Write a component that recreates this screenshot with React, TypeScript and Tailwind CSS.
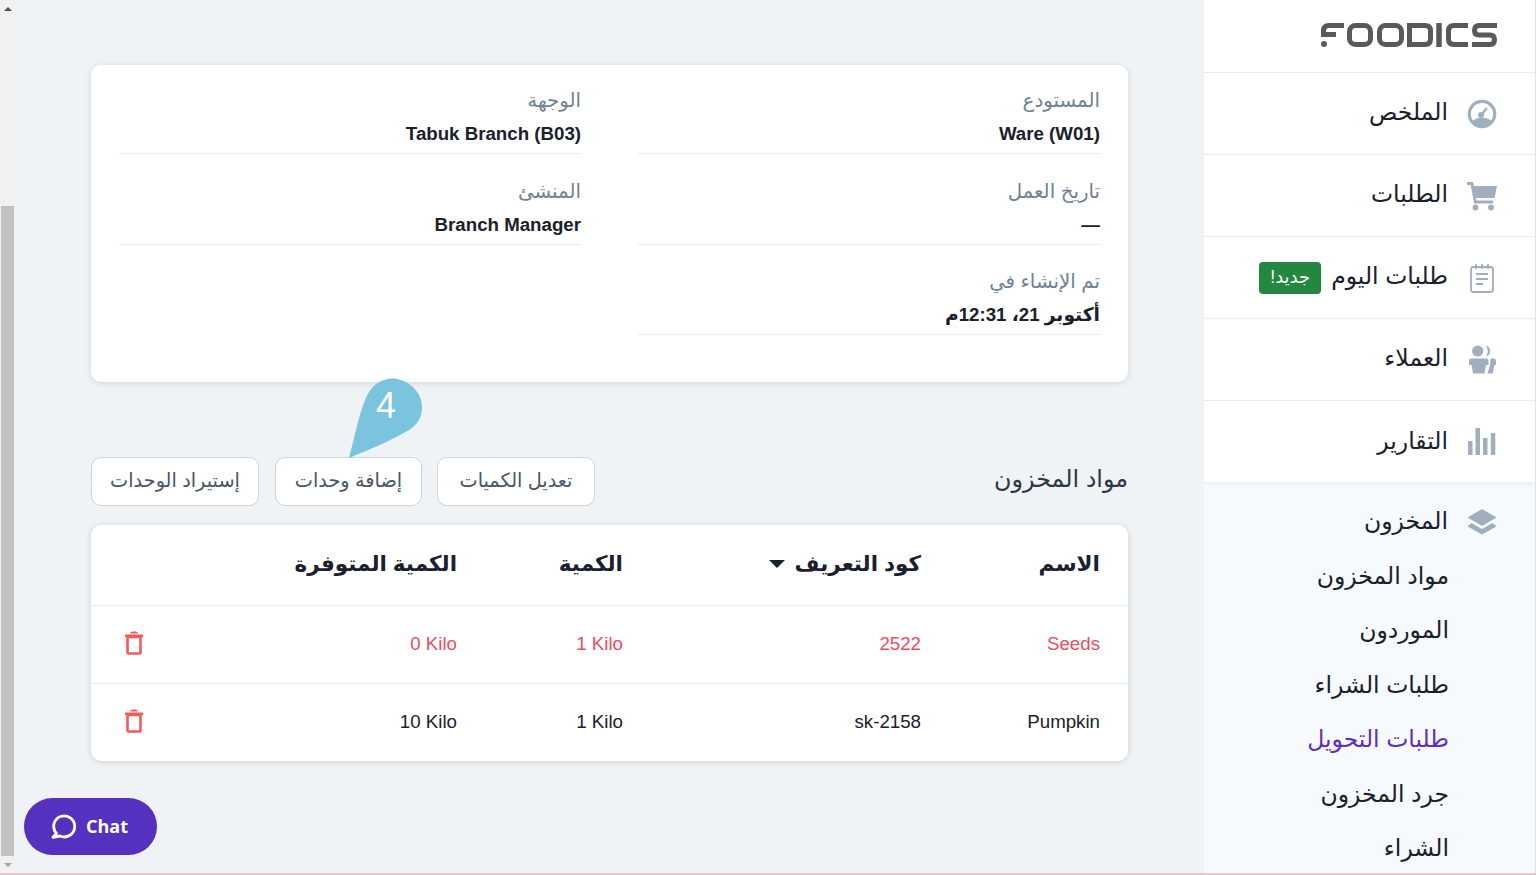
import React from "react";

const font = "font-['Liberation_Sans','DejaVu_Sans',sans-serif]";

function Logo() {
  return (
    <svg width="177" height="24" viewBox="0 0 177 24" fill="none" stroke="#595959" strokeWidth="5">
      <path d="M23 2.500H8Q2.500 2.500 2.500 8V11.500H15" />
      <circle cx="3" cy="21" r="3" fill="#595959" stroke="none" />
      <rect x="28.500" y="2.500" width="21" height="19" rx="6" />
      <rect x="58.500" y="2.500" width="22" height="19" rx="6" />
      <path d="M88.500 2.500V21.500H104Q109.500 21.500 109.500 16V8Q109.500 2.500 104 2.500H88.500Z" />
      <path d="M118 0V24" strokeWidth="5.500" />
      <path d="M147 2.500H133Q127.500 2.500 127.500 8V16Q127.500 21.500 133 21.500H147" />
      <path d="M176 2.500H158Q153.500 2.500 153.500 7.500Q153.500 12 158 12H169Q173.500 12 173.500 16.500Q173.500 21.500 169 21.500H151" />
    </svg>
  );
}

const Gauge = () => (
  <svg width="30" height="30" viewBox="0 0 30 30" fill="none">
    <circle cx="15" cy="15" r="12.700" stroke="#a0aec0" strokeWidth="3.200" />
    <path d="M5.500 21.500Q15 15.500 24.500 21.500L21 26L15 27.500L9 26Z" fill="#a0aec0" />
    <circle cx="14" cy="16" r="3" fill="#a0aec0" />
    <path d="M14 16L20 9" stroke="#a0aec0" strokeWidth="2.400" />
  </svg>
);
const Cart = () => (
  <svg width="30" height="30" viewBox="0 0 30 30" fill="#a0aec0">
    <path d="M0 1H6L7 5H30L27.500 17H9L9.500 19.500H26V22.500H7L3.800 4H0Z" />
    <circle cx="8.500" cy="26.500" r="2.900" />
    <circle cx="24" cy="26.500" r="2.900" />
  </svg>
);
const Clip = () => (
  <svg width="26" height="30" viewBox="0 0 26 30" fill="none" stroke="#a0aec0" strokeWidth="1.800">
    <rect x="2" y="4" width="22" height="25" rx="2.500" />
    <path d="M7 1V6M13 1V6M19 1V6M7 11H19M7 16H19M7 21H14" />
  </svg>
);
const Users = () => (
  <svg width="27" height="29" viewBox="0 0 27 29" fill="#a0aec0">
    <circle cx="8.700" cy="6" r="5.600" />
    <path d="M16.500 0.600A5.600 5.600 0 0 1 17 11.500A8.500 8.500 0 0 0 16.500 0.600Z" />
    <path d="M0 16Q0 13.500 2 13.500H17Q19.500 13.500 19.500 16V20H17L15.500 28.500H4L2.500 20H0Z" />
    <path d="M21.500 13.500H25Q27 13.500 27 16V20H25.500L23.500 28.500H18.500L21 20Z" />
  </svg>
);
const Bars = () => (
  <svg width="28" height="30" viewBox="0 0 28 30" fill="#a0aec0">
    <rect x="0" y="14" width="4.500" height="14" />
    <rect x="7.500" y="1" width="4.500" height="27" />
    <rect x="15" y="11" width="4.500" height="17" />
    <rect x="22.800" y="6" width="4.500" height="22" />
  </svg>
);
const Layers = () => (
  <svg width="30" height="28" viewBox="0 0 30 28" fill="#a0aec0">
    <path d="M15 1L29.500 9.500L15 18L0.500 9.500Z" />
    <path d="M4.500 15L15 21L25.500 15L29.500 18.500L15 26.500L0.500 18.500Z" />
  </svg>
);
const Trash = () => (
  <svg width="20" height="24" viewBox="0 0 20 24" fill="none" stroke="#f45b5b" strokeWidth="2.600">
    <path d="M1 4.800H19" />
    <path d="M7 2.500Q7 1.500 8.500 1.500H11.500Q13 1.500 13 2.500" strokeWidth="1.800" />
    <rect x="3.500" y="6" width="13" height="16.500" rx="1" />
  </svg>
);
const ChatIcon = () => (
  <svg width="26" height="26" viewBox="0 0 26 26" fill="none" stroke="#fff" strokeWidth="2.800" strokeLinecap="round" strokeLinejoin="round">
    <path d="M5.500 19.500A10.500 10.500 0 1 1 9 22L2 23.300Z" />
  </svg>
);
const Marker = () => (
  <svg width="76" height="82" viewBox="0 0 76 82" fill="#7ac4de" className="absolute left-0 top-0">
    <path d="M0 81C8 50 12 28 20 15C26 5 38 0 48 2C63 5 73 17 73 30C73 41 68 48 60 53C45 62 20 73 0 81Z" />
  </svg>
);

function Field({ label, value }: { label: string; value: string }) {
  return (
    <div className="mb-[23.500px] h-[67px] border-b border-[#e8ecf1]">
      <div className="text-[19.800px] leading-[27px] text-[#718096]">{label}</div>
      <div className="mt-[6px] text-[18.700px] leading-[27px] font-bold text-[#1a202c]">
        <span dir="auto">{value}</span>
      </div>
    </div>
  );
}

function NavRow({ icon, label, badge }: { icon: React.ReactNode; label: string; badge?: string }) {
  return (
    <div className="flex h-[82px] items-center border-b border-[#e8edf3] pr-[38px]">
      <div className="flex w-[30px] justify-center">{icon}</div>
      <div className="mr-[19px] -mt-[1px] text-[23.500px] text-[#1a202c]">{label}</div>
      {badge && (
        <div className="mr-[10px] flex h-[32px] w-[62px] items-center justify-center rounded-[4px] bg-[#22883f] text-[18px] text-white">
          {badge}
        </div>
      )}
    </div>
  );
}

function Btn({ label, w }: { label: string; w: string }) {
  return (
    <button className={`h-[49px] ${w} rounded-[10px] border border-[#cbd5e0] bg-white pb-[1px] text-[19.300px] text-[#4a5568]`}>
      {label}
    </button>
  );
}

const tableCols = "grid grid-cols-[179px_298px_166px_1fr]";

function Row({ cells, red }: { cells: string[]; red?: boolean }) {
  return (
    <div className={`${tableCols} h-[78px] items-center border-t border-[#e8ecf1] text-[18.700px] ${red ? "text-[#e94e5e]" : "text-[#1a202c]"}`}>
      {cells.map((c) => (
        <div key={c} className="pr-[28px]"><span dir="ltr">{c}</span></div>
      ))}
    </div>
  );
}

export default function App() {
  return (
    <div className={`flex h-[875px] w-[1536px] flex-col overflow-hidden bg-[#eff3f6] ${font}`} dir="ltr">
      <div className="flex min-h-0 flex-1">
        <div className="flex w-[15px] shrink-0 flex-col bg-[#f1f1f1]">
          <div className="flex h-[17px] items-center justify-center">
            <div className="h-0 w-0 border-x-[4px] border-b-[4px] border-x-transparent border-b-[#505050]" />
          </div>
          <div className="mt-[189px] ml-[1px] w-[13px] flex-1 bg-[#c1c1c1]" />
          <div className="flex h-[17px] items-center justify-center">
            <div className="h-0 w-0 border-x-[4px] border-t-[4px] border-x-transparent border-t-[#a3a3a3]" />
          </div>
        </div>

        <main className="relative min-w-0 flex-1 px-[76px] pt-[65px]" dir="rtl">
          <section className="grid h-[317px] grid-cols-2 content-start gap-x-[57px] rounded-[10px] bg-white px-[28px] pt-[22px] shadow-[0_1px_6px_rgba(0,0,0,0.12)]">
            <Field label="المستودع" value="Ware (W01)" />
            <Field label="الوجهة" value="Tabuk Branch (B03)" />
            <Field label="تاريخ العمل" value="—" />
            <Field label="المنشئ" value="Branch Manager" />
            <Field label="تم الإنشاء في" value="أكتوبر 21، 12:31م" />
          </section>

          <div className="mt-[75px] flex h-[49px] items-center justify-between">
            <h2 className="-mt-[6px] text-[23.800px] font-normal text-[#2d3748]">مواد المخزون</h2>
            <div className="flex">
              <Btn label="تعديل الكميات" w="w-[158px]" />
              <div className="relative mr-[15px]">
                <Btn label="إضافة وحدات" w="w-[147px]" />
                <div className="absolute bottom-[47px] left-[74px] h-[82px] w-[76px]">
                  <Marker />
                  <span className="absolute left-[27px] top-[8px] text-[36px] leading-[42px] text-white">4</span>
                </div>
              </div>
              <div className="mr-[16px]"><Btn label="إستيراد الوحدات" w="w-[168px]" /></div>
            </div>
          </div>

          <section className="relative mt-[19px] rounded-[10px] bg-white shadow-[0_1px_6px_rgba(0,0,0,0.14)]">
            <div className={`${tableCols} h-[80px] items-center pb-[2px] text-[21.500px] font-bold text-[#1a202c]`}>
              <div className="pr-[28px]">الاسم</div>
              <div className="flex items-center gap-[10px] pr-[28px]">
                كود التعريف
                <span className="h-0 w-0 border-x-[8px] border-t-[8px] border-x-transparent border-t-[#1a202c]" />
              </div>
              <div className="pr-[28px]">الكمية</div>
              <div className="pr-[28px]">الكمية المتوفرة</div>
            </div>
            <div className="relative">
              <Row red cells={["Seeds", "2522", "1 Kilo", "0 Kilo"]} />
              <div className="absolute left-[33px] top-[26px]"><Trash /></div>
            </div>
            <div className="relative">
              <Row cells={["Pumpkin", "sk-2158", "1 Kilo", "10 Kilo"]} />
              <div className="absolute left-[33px] top-[26px]"><Trash /></div>
            </div>
          </section>

          <div className="absolute bottom-[18px] left-[9px] flex h-[57px] w-[133px] items-center justify-center gap-[9px] rounded-full bg-[#5630bf] pr-[2px] text-[18px] font-bold text-white" dir="ltr">
            <ChatIcon />
            <span className="font-['Open_Sans',sans-serif]">Chat</span>
          </div>
        </main>

        <aside className="flex w-[332px] shrink-0 flex-col overflow-hidden border-r border-[#dfe3e8] bg-[#f7fafc]" dir="rtl">
          <div className="bg-white shadow-[0_1px_4px_rgba(0,0,0,0.08)]">
            <div className="flex h-[73px] items-center border-b border-[#e8edf3] pr-[37px] pb-[2px]">
              <Logo />
            </div>
            <NavRow icon={<Gauge />} label="الملخص" />
            <NavRow icon={<Cart />} label="الطلبات" />
            <NavRow icon={<Clip />} label="طلبات اليوم" badge="جديد!" />
            <NavRow icon={<Users />} label="العملاء" />
            <div className="h-[81px] overflow-hidden [&>div]:border-b-0"><NavRow icon={<Bars />} label="التقارير" /></div>
          </div>
          <div className="flex h-[80px] shrink-0 items-center pr-[38px]">
            <Layers />
            <div className="mr-[19px] text-[23.500px] text-[#1a202c]">المخزون</div>
          </div>
          <ul className="pr-[86px] text-[23.500px] text-[#1a202c]">
            <li className="h-[54.400px] -mt-[13px] leading-[54px]">مواد المخزون</li>
            <li className="h-[54.400px] leading-[54px]">الموردون</li>
            <li className="h-[54.400px] leading-[54px]">طلبات الشراء</li>
            <li className="h-[54.400px] leading-[54px] text-[#5d2fc2]">طلبات التحويل</li>
            <li className="h-[54.400px] leading-[54px]">جرد المخزون</li>
            <li className="h-[54.400px] leading-[54px]">الشراء</li>
          </ul>
        </aside>
      </div>
      <div className="h-[2px] shrink-0 bg-[#e8c8cc]" />
    </div>
  );
}
